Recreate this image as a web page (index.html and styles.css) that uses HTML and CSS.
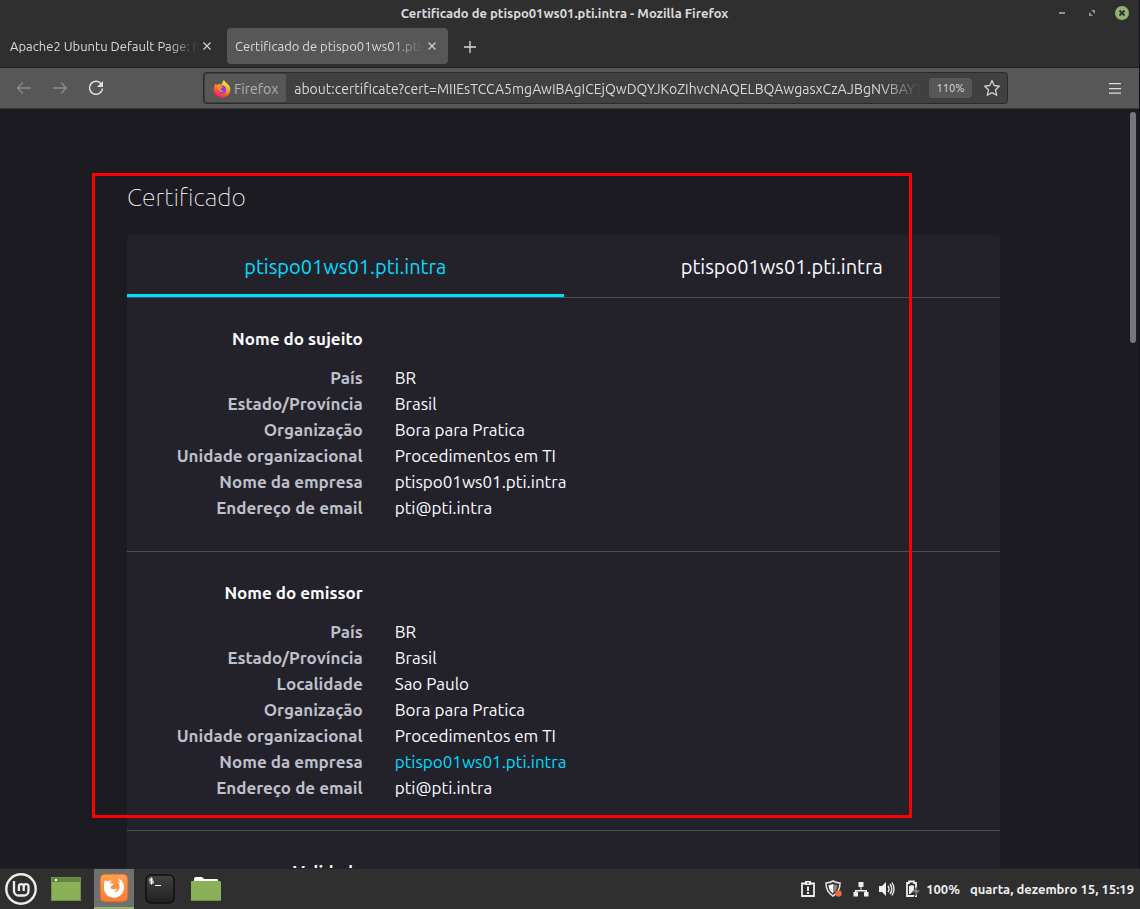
FILE: index.html
```html
<!DOCTYPE html>
<html lang="pt-BR">
<head>
<meta charset="utf-8">
<title>Certificado de ptispo01ws01.pti.intra</title>
<link rel="stylesheet" href="styles.css">
</head>
<body>
<div class="desktop">
  <div class="window">
    <header class="titlebar">
      <span class="window-title">Certificado de ptispo01ws01.pti.intra - Mozilla Firefox</span>
      <div class="window-buttons">
        <button type="button" aria-label="Minimizar"><svg width="14" height="14" viewBox="0 0 14 14"><path d="M4 6h6v2H4z" fill="#929292"/></svg></button>
        <button type="button" aria-label="Restaurar"><svg width="14" height="14" viewBox="0 0 14 14"><path d="M6 4h4v4zM4 6l4 4H4z" fill="#929292"/></svg></button>
        <button type="button" aria-label="Fechar"><svg width="14" height="14" viewBox="0 0 14 14"><circle cx="7" cy="7" r="7" fill="#92b372"/><path d="M4.500 4.500l5 5M9.500 4.500l-5 5" stroke="#2f2f2f" stroke-width="1.800"/></svg></button>
      </div>
    </header>
    <nav class="tabs" aria-label="Abas">
      <div class="tab">
        <button type="button" class="tab-label">Apache2 Ubuntu Default Page: It works</button>
        <button type="button" class="tab-close" aria-label="Fechar aba"><svg width="8" height="8" viewBox="0 0 8 8"><path d="M.5.5l7 7M7.500.5l-7 7" stroke="#d5d5d5" stroke-width="1.100"/></svg></button>
      </div>
      <div class="tab tab-active">
        <button type="button" class="tab-label">Certificado de ptispo01ws01.pti.intra</button>
        <button type="button" class="tab-close" aria-label="Fechar aba"><svg width="8" height="8" viewBox="0 0 8 8"><path d="M.5.5l7 7M7.500.5l-7 7" stroke="#d5d5d5" stroke-width="1.100"/></svg></button>
      </div>
      <button type="button" class="new-tab" aria-label="Nova aba"><svg width="12" height="12" viewBox="0 0 12 12"><path d="M6 0v12M0 6h12" stroke="#dadada" stroke-width="1.300"/></svg></button>
    </nav>
    <div class="toolbar">
      <div class="nav-buttons">
        <button type="button" aria-label="Voltar"><svg width="16" height="16" viewBox="0 0 16 16" fill="none" stroke="#8d8d8d" stroke-width="1.300"><path d="M15 8H1.500M7 2.500L1.500 8L7 13.500"/></svg></button>
        <button type="button" aria-label="Avançar"><svg width="16" height="16" viewBox="0 0 16 16" fill="none" stroke="#8d8d8d" stroke-width="1.300"><path d="M1 8h13.500M9 2.500L14.500 8L9 13.500"/></svg></button>
        <button type="button" aria-label="Recarregar"><svg width="16" height="16" viewBox="0 0 16 16"><path d="M13.300 4A6.500 6.500 0 1 0 14.500 8.500" fill="none" stroke="#e2e2e2" stroke-width="1.500"/><path d="M15 1v6H9z" fill="#e2e2e2"/></svg></button>
      </div>
      <div class="urlbar">
        <button type="button" class="identity">
          <svg width="18" height="18" viewBox="0 0 18 18">
            <defs><linearGradient id="flame" x1="0.800" y1="0" x2="0.300" y2="1"><stop offset="0" stop-color="#fff14a"/><stop offset="0.400" stop-color="#ffac28"/><stop offset="0.700" stop-color="#ff5634"/><stop offset="1" stop-color="#f5156c"/></linearGradient></defs>
            <path d="M11 0c.3 1.500 2 2.300 3 3.500C16 5 17.500 7 17.300 10c-.3 4.500-4 7.600-8.300 7.600S.7 14.300.7 9.800C.7 7 1.600 5 3 3.200c0 1 .3 1.600.8 2C4.600 4.300 6 4.200 7.300 4.500 8.500 4.400 9 3.800 9.300 3 9.500 1.800 10 .8 11 0z" fill="url(#flame)"/>
            <circle cx="9" cy="9.500" r="4" fill="#7542e5"/>
            <path d="M3.500 5.500C5.500 4 8 5 8.500 6.500c1 .2 1.500.6 1.300 1.200C9 8.300 8 8.400 7.500 9c0 1.500 1.500 2.200 3.500 1.600-1 2-4.500 2.300-5.700-.3C4.500 8.500 4 7 3.500 5.500z" fill="#ff8d26"/>
          </svg>
          <span>Firefox</span>
        </button>
        <input class="address" type="text" aria-label="Endereço" value="about:certificate?cert=MIIEsTCCA5mgAwIBAgICEjQwDQYJKoZIhvcNAQELBQAwgasxCzAJBgNVBAYTAkJSMQ8wDQYDVQQIDAZCcmFzaWw">
        <button type="button" class="zoom">110%</button>
        <button type="button" class="star" aria-label="Adicionar aos favoritos"><svg width="18" height="18" viewBox="0 0 18 18"><path d="M9 1.500l2.200 5 5.300.6-4 3.700 1.200 5.500L9 13.600l-4.700 2.700 1.200-5.500-4-3.700 5.300-.6z" fill="none" stroke="#d0d0d0" stroke-width="1.300" stroke-linejoin="round"/></svg></button>
      </div>
      <button type="button" class="menu" aria-label="Menu"><svg width="12" height="11" viewBox="0 0 12 11"><path d="M0 0h12v1.200H0zM0 5h12v1.200H0zM0 9.500h12v1.200H0z" fill="#dedede"/></svg></button>
    </div>
    <div class="viewport">
      <main class="page">
        <h1>Certificado</h1>
        <div class="certificate">
          <div class="cert-tabs">
            <button type="button" class="cert-tab selected">ptispo01ws01.pti.intra</button>
            <button type="button" class="cert-tab">ptispo01ws01.pti.intra</button>
          </div>
          <section class="group">
            <h2>Nome do sujeito</h2>
            <dl>
              <dt>País</dt><dd>BR</dd>
              <dt>Estado/Província</dt><dd>Brasil</dd>
              <dt>Organização</dt><dd>Bora para Pratica</dd>
              <dt>Unidade organizacional</dt><dd>Procedimentos em TI</dd>
              <dt>Nome da empresa</dt><dd>ptispo01ws01.pti.intra</dd>
              <dt>Endereço de email</dt><dd>pti@pti.intra</dd>
            </dl>
          </section>
          <section class="group">
            <h2>Nome do emissor</h2>
            <dl>
              <dt>País</dt><dd>BR</dd>
              <dt>Estado/Província</dt><dd>Brasil</dd>
              <dt>Localidade</dt><dd>Sao Paulo</dd>
              <dt>Organização</dt><dd>Bora para Pratica</dd>
              <dt>Unidade organizacional</dt><dd>Procedimentos em TI</dd>
              <dt>Nome da empresa</dt><dd><a href="#emissor">ptispo01ws01.pti.intra</a></dd>
              <dt>Endereço de email</dt><dd>pti@pti.intra</dd>
            </dl>
          </section>
          <section class="group">
            <h2>Validade</h2>
          </section>
        </div>
        <div class="highlight"></div>
      </main>
      <div class="scrollbar"><div class="thumb"></div></div>
    </div>
  </div>
  <footer class="taskbar">
    <div class="launchers">
      <button type="button" aria-label="Menu Mint"><svg width="32" height="32" viewBox="0 0 32 32" fill="none" stroke="#ededed"><circle cx="16" cy="16" r="14.700" stroke-width="2.400"/><path d="M9 8v10a4.500 4.500 0 0 0 4.500 4.500h5.500a4.500 4.500 0 0 0 4.500-4.500v-4.500a2.400 2.400 0 0 0-4.800 0v4.500M18.700 13.500a2.400 2.400 0 0 0-4.800 0v4.500" stroke-width="2.300"/></svg></button>
      <button type="button" aria-label="Mostrar área de trabalho"><svg width="30" height="24" viewBox="0 0 30 24"><path d="M0 0h30v24H0z" fill="#8bb158"/><path d="M0 0h30v5H0z" fill="#688442"/><path d="M4 2h2v2H4z" fill="#fff"/><path d="M.5.5h29v23H.5z" fill="none" stroke="#6e9142"/></svg></button>
      <button type="button" class="running" aria-label="Firefox"><svg width="30" height="30" viewBox="0 0 30 30"><defs><linearGradient id="tile" x1="0" y1="0" x2="0" y2="1"><stop offset="0" stop-color="#ffa24e"/><stop offset="1" stop-color="#f67b35"/></linearGradient></defs><rect x="1" y="1" width="28" height="28" rx="5" fill="url(#tile)" stroke="#b66434"/><path d="M6 7c1 1 1.500 1.500 3 1.300 1.500-.8 2.500-1 4-.8-1.500.8-2 1.500-2 2.500 1.500.2 3 .2 3.500 1-.3 1.300-2.500 1.700-3 3 .2 2 2 2.700 4 2 1.500-.7 3-.3 3.300.5-1.500 0-2 2-4.300 2.500 3 .5 5.500-1.500 6-4 .3-3-.5-4.500-2-6.500 1.500.5 2 1.500 2.500 2 0-2-1-3.500-2.500-5C23 6.500 25 10 25 14.500c0 6-4.500 10.300-10 10.300S5 20.500 5 15c0-3 0-5 1-8z" fill="#fff"/></svg></button>
      <button type="button" aria-label="Terminal"><svg width="30" height="30" viewBox="0 0 30 30"><defs><linearGradient id="term" x1="0" y1="0" x2="0" y2="1"><stop offset="0" stop-color="#424242"/><stop offset="1" stop-color="#202020"/></linearGradient></defs><rect x="1" y="1" width="28" height="28" rx="5" fill="url(#term)" stroke="#111" stroke-width="1.500"/><path d="M8 5H5v2h3v2H4.500M6.500 3.500v7M10 11.500h6" fill="none" stroke="#fff" stroke-width="1.100"/></svg></button>
      <button type="button" aria-label="Arquivos"><svg width="30" height="24" viewBox="0 0 30 24"><path d="M3 5V2q0-2 2-2h6l2 2h13q1 0 1 1v2z" fill="#fff"/><rect y="4" width="30" height="20" rx="1" fill="#8bb158"/><path d="M0 23.500h30" stroke="#6e9142"/></svg></button>
    </div>
    <div class="tray">
      <svg width="14" height="16" viewBox="0 0 14 16"><path d="M1 2.500h12V15H1z" fill="none" stroke="#eee" stroke-width="1.800"/><path d="M4 0h6v4H4z" fill="#eee"/><path d="M6 1.500h2v1H6z" fill="#2f2f2f"/><path d="M6 5.500h2v4.500H6zM6 11h2v2H6z" fill="#eee"/></svg>
      <svg width="18" height="18" viewBox="0 0 18 18"><path d="M8 1c2 1.300 4.500 1.800 7 2 0 5.500-1.500 10-7 13C2.500 13 1 8.500 1 3c2.500-.2 5-.7 7-2z" fill="#2f2f2f" stroke="#ddd" stroke-width="1.600"/><path d="M8 4c1.500.8 3 1 4.500 1.300C12.300 9 11 11.500 8 13.500z" fill="#8b8b8b"/><path d="M8 4c-1.500.8-3 1-4.500 1.300C3.700 9 5 11.500 8 13.500z" fill="#fff"/><circle cx="13.500" cy="13.500" r="3.200" fill="#ee6c37"/></svg>
      <svg width="16" height="16" viewBox="0 0 16 16"><path d="M5.500 1h5v5H8.500v3H14v2h1.500v4.500H11V11h1.500v-.5h-9v.5H5v4.500H.5V11H2V9h5.500V6h-2z" fill="#eee"/></svg>
      <svg width="16" height="16" viewBox="0 0 16 16"><path d="M0 5h3l4-4v14l-4-4H0z" fill="#eee"/><path d="M9 5q2 3 0 6M11 3q3.500 5 0 10M13 1.500q4 6.500 0 13" fill="none" stroke="#eee" stroke-width="1.400"/></svg>
      <div class="battery">
        <svg width="16" height="18" viewBox="0 0 16 18"><path d="M2 3h2V1.500h5V3h2v13H2z" fill="none" stroke="#eee" stroke-width="1.800"/><path d="M4 6l3-1 2 1v5l-4 3H4z" fill="#eee"/><path d="M13 6l-6 6.500h4l-2 4.500 6.500-7h-4z" fill="#858585" stroke="#2f2f2f" stroke-width=".6"/></svg>
        <span>100%</span>
      </div>
      <time class="clock">quarta, dezembro 15, 15:19</time>
    </div>
  </footer>
</div>
</body>
</html>
```
FILE: styles.css
```css
* { box-sizing: border-box; }
body {
  margin: 0;
  background: #10141a;
  color: #fbfbfe;
  font-family: Ubuntu, "Noto Sans", sans-serif;
  font-size: 17px;
}
button {
  margin: 0;
  padding: 0;
  border: 0;
  background: none;
  color: inherit;
  font: inherit;
}
svg { display: block; flex: none; }
h1, h2, dl, dd { margin: 0; }

.desktop {
  display: flex;
  flex-direction: column;
  height: 100vh;
  overflow: hidden;
}
.window {
  display: flex;
  flex: 1;
  flex-direction: column;
  min-height: 0;
  margin-right: 1px;
}

.titlebar {
  display: grid;
  grid-template-columns: 1fr auto 1fr;
  align-items: center;
  height: 28px;
  padding: 0 10px 2px 0;
  background: #2f2f2f;
  color: #dadada;
  font-size: 13px;
  font-weight: 700;
}
.window-title { grid-column: 2; }
.window-buttons {
  display: flex;
  justify-content: flex-end;
  gap: 16px;
}

.tabs {
  display: flex;
  align-items: flex-start;
  height: 40px;
  border-bottom: 1px solid #202020;
  background: #2f2f2f;
  color: #dadada;
  font-size: 13px;
}
.tab {
  display: flex;
  align-items: center;
  width: 221px;
  height: 36px;
  margin-right: 3px;
  padding: 0 12px 0 8px;
  border-radius: 4px;
}
.tab:first-child { margin-right: 6px; padding: 0 10px; }
.tab-active { background: #575757; }
.tab-label {
  flex: 1;
  min-width: 0;
  overflow: hidden;
  text-align: left;
  white-space: nowrap;
  mask-image: linear-gradient(to left, transparent, #000 32px);
}
.tab-close { padding: 0 0 0 4px; }
.new-tab { align-self: flex-start; padding: 13px; }

.toolbar {
  display: flex;
  align-items: center;
  height: 41px;
  padding: 0 18px 0 16px;
  border-bottom: 1px solid #3b3b3d;
  background: #575757;
}
.nav-buttons { display: flex; gap: 20px; }
.urlbar {
  display: flex;
  flex: 1;
  align-items: center;
  min-width: 0;
  height: 32px;
  margin: 0 101px 0 99px;
  padding: 0 6px 0 1px;
  border: 1px solid #2a2a2a;
  border-radius: 4px;
  background: #404040;
}
.identity {
  display: flex;
  align-items: center;
  gap: 3px;
  height: 28px;
  padding: 1px 8px 0;
  border-radius: 3px;
  background: #575757;
  color: #b0b0b0;
  font-size: 14px;
}
.address {
  flex: 1;
  min-width: 0;
  margin: 0 8px;
  padding: 1px 0 0;
  border: 0;
  outline: 0;
  background: none;
  color: #d8d8d8;
  font: inherit;
  font-size: 14px;
  mask-image: linear-gradient(to left, transparent, #000 40px);
}
.zoom {
  width: 43px;
  height: 20px;
  border-radius: 3px;
  background: #575757;
  color: #d8d8d8;
  font-size: 11px;
}
.star { padding-left: 11px; }

.viewport {
  position: relative;
  display: flex;
  flex: 1;
  min-height: 0;
  background: #1c1b22;
}
.page {
  position: relative;
  flex: 1;
  overflow: hidden;
  padding: 70px 127px 0;
}
h1 {
  margin-bottom: 20px;
  font-size: 25px;
  font-weight: 100;
  line-height: 36px;
}
.certificate {
  overflow: hidden;
  border-radius: 4px;
  background: #23222b;
}
.cert-tabs {
  display: grid;
  grid-template-columns: 1fr 1fr;
  border-bottom: 1px solid #4d4d55;
}
.cert-tab {
  height: 62px;
  padding-top: 4px;
  border-bottom: 3px solid transparent;
  font-size: 20px;
}
.selected { border-color: #00ddff; color: #00ddff; }
.group {
  padding: 28px 0 30px;
  border-bottom: 1px solid #4d4d55;
  line-height: 26px;
}
.group + .group { padding: 28px 0 29px; }
h2 {
  width: 27%;
  margin-bottom: 13px;
  font-size: 17px;
  font-weight: 700;
  text-align: right;
}
dl {
  display: grid;
  grid-template-columns: 27% 1fr;
  column-gap: 32px;
}
dt { color: #bfbfc9; font-weight: 700; text-align: right; }
a { color: #00ddff; text-decoration: none; }
.highlight {
  position: absolute;
  top: 64px;
  right: 215px;
  left: 92px;
  height: 645px;
  border: 3px solid #f00;
}
.scrollbar {
  width: 12px;
  padding: 3px 3px 0 3px;
}
.thumb {
  height: 231px;
  border-radius: 3px;
  background: #77767c;
}

.taskbar {
  display: flex;
  align-items: center;
  justify-content: space-between;
  height: 41px;
  padding: 0 6px 0 5px;
  border-top: 1px solid #262626;
  background: #2f2f2f;
}
.launchers { display: flex; height: 40px; }
.launchers button {
  display: flex;
  align-items: center;
  justify-content: center;
  width: 40px;
  margin-right: 6px;
}
.launchers button:first-child { width: 32px; margin-right: 9px; }
.launchers .running {
  margin-left: 2px;
  border-bottom: 2px solid #92b372;
  background: #707070;
}
.tray {
  display: flex;
  align-items: center;
  gap: 10px;
  color: #ededed;
  font-size: 13px;
  font-weight: 700;
}
.battery { display: flex; align-items: center; gap: 5px; }
```
